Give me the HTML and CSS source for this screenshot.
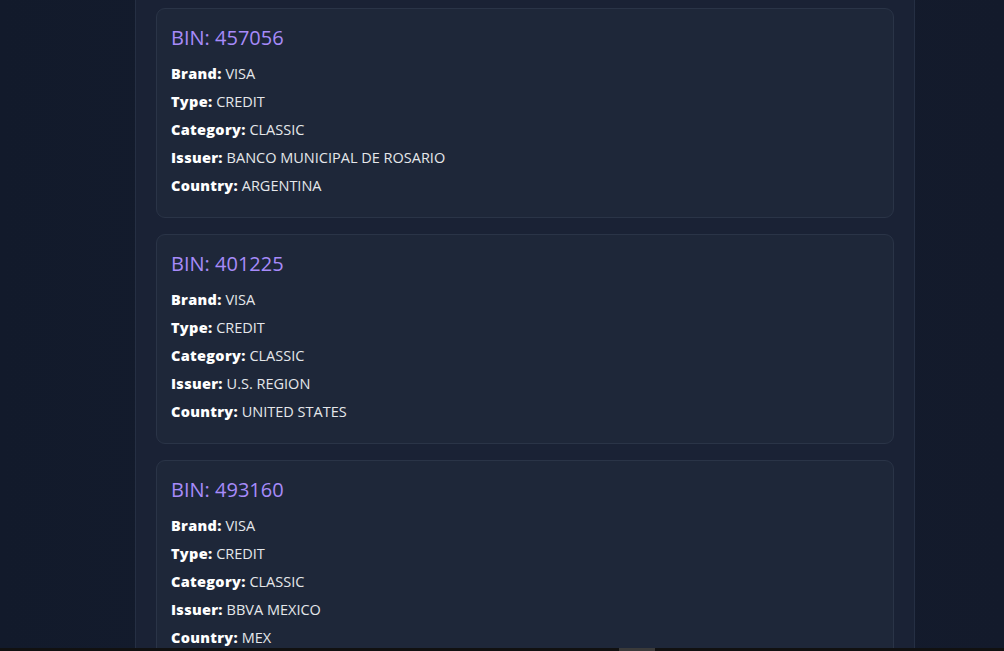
FILE: index.html
```html
<!DOCTYPE html>
<html lang="en">
<head>
<meta charset="utf-8">
<title>BIN Results</title>
<link rel="stylesheet" href="styles.css">
</head>
<body>
<main class="panel">
  <section class="card">
    <h3 class="bin">BIN: 457056</h3>
    <p class="row"><strong>Brand:</strong> VISA</p>
    <p class="row"><strong>Type:</strong> CREDIT</p>
    <p class="row"><strong>Category:</strong> CLASSIC</p>
    <p class="row"><strong>Issuer:</strong> BANCO MUNICIPAL DE ROSARIO</p>
    <p class="row"><strong>Country:</strong> ARGENTINA</p>
  </section>
  <section class="card">
    <h3 class="bin">BIN: 401225</h3>
    <p class="row"><strong>Brand:</strong> VISA</p>
    <p class="row"><strong>Type:</strong> CREDIT</p>
    <p class="row"><strong>Category:</strong> CLASSIC</p>
    <p class="row"><strong>Issuer:</strong> U.S. REGION</p>
    <p class="row"><strong>Country:</strong> UNITED STATES</p>
  </section>
  <section class="card">
    <h3 class="bin">BIN: 493160</h3>
    <p class="row"><strong>Brand:</strong> VISA</p>
    <p class="row"><strong>Type:</strong> CREDIT</p>
    <p class="row"><strong>Category:</strong> CLASSIC</p>
    <p class="row"><strong>Issuer:</strong> BBVA MEXICO</p>
    <p class="row"><strong>Country:</strong> MEX</p>
  </section>
</main>
<div class="hscroll"><div class="hthumb"></div></div>
</body>
</html>
```
FILE: styles.css
```css
html, body {
  margin: 0;
  padding: 0;
  height: 100%;
  overflow: hidden;
}
body {
  background: linear-gradient(90deg, #121a2b 0%, #151d2f 50%, #131a2b 100%);
  font-family: "Open Sans", "Liberation Sans", sans-serif;
  color: #f3f4f6;
}
.panel {
  box-sizing: border-box;
  width: 780px;
  margin-left: 135px;
  margin-top: -12px;
  min-height: 700px;
  padding: 20px 20px;
  background: #1a2235;
  border-left: 1px solid #252f43;
  border-right: 1px solid #252f43;
  display: flex;
  flex-direction: column;
  gap: 16px;
}
.card {
  background: #1e2739;
  border: 1px solid #2a3447;
  border-radius: 9px;
  padding: 14px 14px 17px;
  display: flex;
  flex-direction: column;
}
.bin {
  margin: 0 0 7px;
  font-size: 20px;
  line-height: 30px;
  font-weight: 500;
  color: #a78bfa;
}
.row {
  margin: 0;
  font-size: 14.5px;
  line-height: 28px;
  color: #e5e7eb;
}
.row strong {
  font-weight: 800;
  letter-spacing: 0.3px;
  color: #ffffff;
}
.hscroll {
  position: fixed;
  left: 0;
  right: 0;
  bottom: 0;
  height: 3px;
  background: #111111;
}
.hthumb {
  position: absolute;
  left: 619px;
  width: 36px;
  top: 0;
  bottom: 0;
  background: #3a3a3a;
}
```
